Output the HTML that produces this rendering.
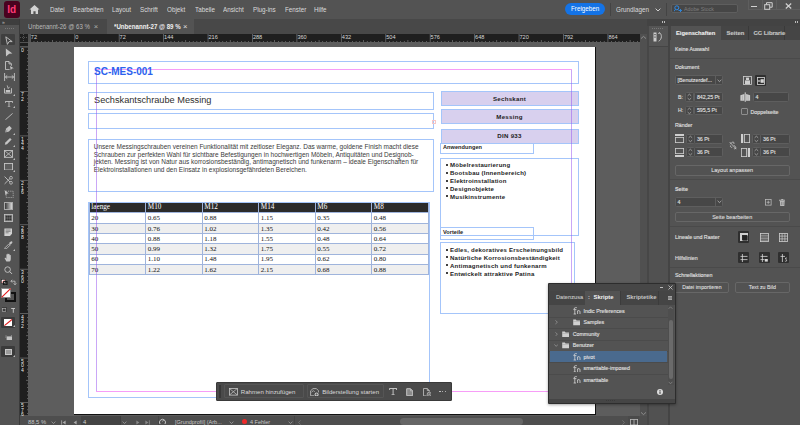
<!DOCTYPE html><html><head><meta charset="utf-8"><style>
html,body{margin:0;padding:0;width:800px;height:425px;overflow:hidden;background:#535353}
#r{position:relative;width:800px;height:425px;overflow:hidden;font-family:'Liberation Sans',sans-serif}
#r div,#r span,#r svg{position:absolute;box-sizing:border-box}
#r span{white-space:nowrap;line-height:1}
.m{color:#dadada;font-size:7px;transform:scaleX(0.9);transform-origin:0 0}
.ui{color:#d4d4d4;font-size:6.2px}
.fr{border:1px solid #8fb2f5}
.lav{background:#d9d1ee;border:1px solid #8fb2f5}
.cell{font-family:'Liberation Serif',serif;font-size:6.6px;color:#111}
.blt{font-weight:bold;font-size:6.5px;color:#1a1a1a;letter-spacing:0.25px}
</style></head><body><div id="r">
<div style="left:0px;top:0px;width:800px;height:19px;background:#535353"></div>
<div style="left:4px;top:1px;width:16px;height:17px;background:#49021f;border-radius:3px"></div>
<span style="left:7.2px;top:4.6px;font-weight:bold;font-size:10px;color:#ff3a76">Id</span>
<svg style="left:29px;top:4px" width="11" height="11" viewBox="0 0 11 11"><path d="M5.5 1 L10.5 5.6 L9 5.6 L9 10 L6.6 10 L6.6 7.2 L4.4 7.2 L4.4 10 L2 10 L2 5.6 L0.5 5.6 Z" fill="#d2d2d2"/></svg>
<span class="m" style="left:49.5px;top:6.1px">Datei</span>
<span class="m" style="left:72.5px;top:6.1px">Bearbeiten</span>
<span class="m" style="left:112px;top:6.1px">Layout</span>
<span class="m" style="left:139.5px;top:6.1px">Schrift</span>
<span class="m" style="left:167px;top:6.1px">Objekt</span>
<span class="m" style="left:194.5px;top:6.1px">Tabelle</span>
<span class="m" style="left:223px;top:6.1px">Ansicht</span>
<span class="m" style="left:252.5px;top:6.1px">Plug-ins</span>
<span class="m" style="left:284.5px;top:6.1px">Fenster</span>
<span class="m" style="left:313.5px;top:6.1px">Hilfe</span>
<div style="left:565px;top:3px;width:39.5px;height:12px;background:#1473e6;border-radius:6px"></div>
<span style="left:570.5px;top:5.8px;font-size:6.8px;color:#fff;transform:scaleX(0.92);transform-origin:0 0">Freigeben</span>
<div style="left:610px;top:3px;width:1px;height:13px;background:#444"></div>
<span class="m" style="left:615.5px;top:5.6px;font-size:7px">Grundlagen</span>
<svg style="left:654.5px;top:8px" width="6" height="4" viewBox="0 0 6 4"><path d="M0.6 0.6 L3 3 L5.4 0.6" stroke="#d0d0d0" stroke-width="1" fill="none"/></svg>
<div style="left:665.5px;top:3px;width:1px;height:13px;background:#444"></div>
<div style="left:670.5px;top:3.5px;width:67px;height:9.5px;background:#464646;border:1px solid #5e5e5e;border-radius:2px"></div>
<svg style="left:673.5px;top:5.3px" width="8" height="7" viewBox="0 0 8 7"><circle cx="2.8" cy="2.8" r="2" stroke="#2d8ceb" stroke-width="1" fill="none"/><path d="M1.2 4.6 L0 6.4 M4.5 5.5 L7.5 5.5 M6 4 L7.5 5.5 L6 7" stroke="#2d8ceb" stroke-width="0.9" fill="none"/></svg>
<span style="left:683.5px;top:5.6px;font-size:6px;color:#7e7e7e;transform:scaleX(0.88);transform-origin:0 0">Adobe Stock</span>
<div style="left:747.5px;top:0px;width:0.6px;height:9.5px;background:#5e5e5e"></div>
<div style="left:761.5px;top:0px;width:0.6px;height:9.5px;background:#5e5e5e"></div>
<div style="left:775.5px;top:0px;width:0.6px;height:9.5px;background:#5e5e5e"></div>
<div style="left:747.5px;top:9.3px;width:53px;height:0.6px;background:#5e5e5e"></div>
<div style="left:751px;top:5.6px;width:6px;height:1.2px;background:#d0d0d0"></div>
<svg style="left:764px;top:1.5px" width="9" height="8" viewBox="0 0 9 8"><rect x="0.7" y="2.7" width="5" height="4.6" stroke="#d0d0d0" stroke-width="1" fill="none"/><path d="M2.5 2.5 V0.7 H8.2 V5.2 H6" stroke="#d0d0d0" stroke-width="1" fill="none"/></svg>
<svg style="left:785px;top:2.5px" width="7" height="6" viewBox="0 0 7 6"><path d="M0.8 0.5 L6.2 5.5 M6.2 0.5 L0.8 5.5" stroke="#d0d0d0" stroke-width="1.2"/></svg>
<div style="left:0px;top:19px;width:648px;height:15px;background:#484848"></div>
<div style="left:107px;top:19px;width:87px;height:15px;background:#535353"></div>
<span class="ui" style="left:28px;top:23.6px;color:#b8b8b8;font-size:6.4px;transform:scaleX(0.95);transform-origin:0 0">Unbenannt-26 @ 63 %</span>
<span class="ui" style="left:93.8px;top:22.8px;color:#b0b0b0;font-size:7.6px">&#215;</span>
<span class="ui" style="left:114px;top:23.6px;color:#f0f0f0;font-size:6.4px;font-weight:bold;transform:scaleX(0.96);transform-origin:0 0">*Unbenannt-27 @ 89 %</span>
<span class="ui" style="left:183px;top:22.8px;color:#e0e0e0;font-size:7.6px">&#215;</span>
<div style="left:0px;top:19px;width:20px;height:406px;background:#535353"></div>
<div style="left:0px;top:19px;width:20px;height:6px;background:#3e3e3e"></div>
<div style="left:19.4px;top:19px;width:0.8px;height:406px;background:#3a3a3a"></div>
<span style="left:2px;top:19.5px;font-size:5px;color:#bbb">&#187;</span>
<div style="left:5px;top:27.5px;width:1px;height:1px;background:#777"></div>
<div style="left:7px;top:27.5px;width:1px;height:1px;background:#777"></div>
<div style="left:9px;top:27.5px;width:1px;height:1px;background:#777"></div>
<div style="left:11px;top:27.5px;width:1px;height:1px;background:#777"></div>
<div style="left:13px;top:27.5px;width:1px;height:1px;background:#777"></div>
<div style="left:1.2px;top:34px;width:14px;height:11px;background:#3f3f3f;border-radius:1px"></div>
<div style="left:20px;top:34px;width:620px;height:8px;background:#1f1f1f"></div>
<div style="left:28px;top:34px;width:1.5px;height:8px;background:#535353"></div>
<div style="left:20px;top:43px;width:8px;height:3px;background:#1f1f1f"></div>
<div style="left:20px;top:47px;width:8px;height:368px;background:#1f1f1f"></div>
<svg style="left:20px;top:34px" width="8" height="8"><path d="M0 3.5 H8 M3.5 0 V8" stroke="#777" stroke-width="0.6" stroke-dasharray="1 1"/></svg>
<div style="left:28px;top:42px;width:612px;height:375px;background:#5d5d5d"></div>
<svg style="left:29.5px;top:34px" width="611" height="8"><rect x="-0.08" y="0" width="0.8" height="8" fill="#6e6e6e"/><rect x="3.67" y="7" width="0.6" height="1" fill="#8a8a8a"/><rect x="7.38" y="7" width="0.6" height="1" fill="#8a8a8a"/><rect x="11.08" y="7" width="0.6" height="1" fill="#8a8a8a"/><rect x="14.78" y="7" width="0.6" height="1" fill="#8a8a8a"/><rect x="18.48" y="7" width="0.6" height="1" fill="#8a8a8a"/><rect x="22.18" y="6" width="0.6" height="2" fill="#8a8a8a"/><rect x="25.89" y="7" width="0.6" height="1" fill="#8a8a8a"/><rect x="29.59" y="7" width="0.6" height="1" fill="#8a8a8a"/><rect x="33.29" y="7" width="0.6" height="1" fill="#8a8a8a"/><rect x="37.00" y="7" width="0.6" height="1" fill="#8a8a8a"/><rect x="40.70" y="7" width="0.6" height="1" fill="#8a8a8a"/><rect x="44.35" y="0" width="0.8" height="8" fill="#6e6e6e"/><rect x="48.10" y="7" width="0.6" height="1" fill="#8a8a8a"/><rect x="51.81" y="7" width="0.6" height="1" fill="#8a8a8a"/><rect x="55.51" y="7" width="0.6" height="1" fill="#8a8a8a"/><rect x="59.21" y="7" width="0.6" height="1" fill="#8a8a8a"/><rect x="62.91" y="7" width="0.6" height="1" fill="#8a8a8a"/><rect x="66.62" y="6" width="0.6" height="2" fill="#8a8a8a"/><rect x="70.32" y="7" width="0.6" height="1" fill="#8a8a8a"/><rect x="74.02" y="7" width="0.6" height="1" fill="#8a8a8a"/><rect x="77.72" y="7" width="0.6" height="1" fill="#8a8a8a"/><rect x="81.42" y="7" width="0.6" height="1" fill="#8a8a8a"/><rect x="85.13" y="7" width="0.6" height="1" fill="#8a8a8a"/><rect x="88.78" y="0" width="0.8" height="8" fill="#6e6e6e"/><rect x="92.53" y="7" width="0.6" height="1" fill="#8a8a8a"/><rect x="96.23" y="7" width="0.6" height="1" fill="#8a8a8a"/><rect x="99.94" y="7" width="0.6" height="1" fill="#8a8a8a"/><rect x="103.64" y="7" width="0.6" height="1" fill="#8a8a8a"/><rect x="107.34" y="7" width="0.6" height="1" fill="#8a8a8a"/><rect x="111.05" y="6" width="0.6" height="2" fill="#8a8a8a"/><rect x="114.75" y="7" width="0.6" height="1" fill="#8a8a8a"/><rect x="118.45" y="7" width="0.6" height="1" fill="#8a8a8a"/><rect x="122.15" y="7" width="0.6" height="1" fill="#8a8a8a"/><rect x="125.86" y="7" width="0.6" height="1" fill="#8a8a8a"/><rect x="129.56" y="7" width="0.6" height="1" fill="#8a8a8a"/><rect x="133.21" y="0" width="0.8" height="8" fill="#6e6e6e"/><rect x="136.96" y="7" width="0.6" height="1" fill="#8a8a8a"/><rect x="140.66" y="7" width="0.6" height="1" fill="#8a8a8a"/><rect x="144.37" y="7" width="0.6" height="1" fill="#8a8a8a"/><rect x="148.07" y="7" width="0.6" height="1" fill="#8a8a8a"/><rect x="151.77" y="7" width="0.6" height="1" fill="#8a8a8a"/><rect x="155.47" y="6" width="0.6" height="2" fill="#8a8a8a"/><rect x="159.18" y="7" width="0.6" height="1" fill="#8a8a8a"/><rect x="162.88" y="7" width="0.6" height="1" fill="#8a8a8a"/><rect x="166.58" y="7" width="0.6" height="1" fill="#8a8a8a"/><rect x="170.28" y="7" width="0.6" height="1" fill="#8a8a8a"/><rect x="173.99" y="7" width="0.6" height="1" fill="#8a8a8a"/><rect x="177.64" y="0" width="0.8" height="8" fill="#6e6e6e"/><rect x="181.39" y="7" width="0.6" height="1" fill="#8a8a8a"/><rect x="185.09" y="7" width="0.6" height="1" fill="#8a8a8a"/><rect x="188.80" y="7" width="0.6" height="1" fill="#8a8a8a"/><rect x="192.50" y="7" width="0.6" height="1" fill="#8a8a8a"/><rect x="196.20" y="7" width="0.6" height="1" fill="#8a8a8a"/><rect x="199.90" y="6" width="0.6" height="2" fill="#8a8a8a"/><rect x="203.61" y="7" width="0.6" height="1" fill="#8a8a8a"/><rect x="207.31" y="7" width="0.6" height="1" fill="#8a8a8a"/><rect x="211.01" y="7" width="0.6" height="1" fill="#8a8a8a"/><rect x="214.71" y="7" width="0.6" height="1" fill="#8a8a8a"/><rect x="218.42" y="7" width="0.6" height="1" fill="#8a8a8a"/><rect x="222.07" y="0" width="0.8" height="8" fill="#6e6e6e"/><rect x="225.82" y="7" width="0.6" height="1" fill="#8a8a8a"/><rect x="229.52" y="7" width="0.6" height="1" fill="#8a8a8a"/><rect x="233.23" y="7" width="0.6" height="1" fill="#8a8a8a"/><rect x="236.93" y="7" width="0.6" height="1" fill="#8a8a8a"/><rect x="240.63" y="7" width="0.6" height="1" fill="#8a8a8a"/><rect x="244.33" y="6" width="0.6" height="2" fill="#8a8a8a"/><rect x="248.04" y="7" width="0.6" height="1" fill="#8a8a8a"/><rect x="251.74" y="7" width="0.6" height="1" fill="#8a8a8a"/><rect x="255.44" y="7" width="0.6" height="1" fill="#8a8a8a"/><rect x="259.14" y="7" width="0.6" height="1" fill="#8a8a8a"/><rect x="262.85" y="7" width="0.6" height="1" fill="#8a8a8a"/><rect x="266.50" y="0" width="0.8" height="8" fill="#6e6e6e"/><rect x="270.25" y="7" width="0.6" height="1" fill="#8a8a8a"/><rect x="273.95" y="7" width="0.6" height="1" fill="#8a8a8a"/><rect x="277.66" y="7" width="0.6" height="1" fill="#8a8a8a"/><rect x="281.36" y="7" width="0.6" height="1" fill="#8a8a8a"/><rect x="285.06" y="7" width="0.6" height="1" fill="#8a8a8a"/><rect x="288.76" y="6" width="0.6" height="2" fill="#8a8a8a"/><rect x="292.47" y="7" width="0.6" height="1" fill="#8a8a8a"/><rect x="296.17" y="7" width="0.6" height="1" fill="#8a8a8a"/><rect x="299.87" y="7" width="0.6" height="1" fill="#8a8a8a"/><rect x="303.57" y="7" width="0.6" height="1" fill="#8a8a8a"/><rect x="307.28" y="7" width="0.6" height="1" fill="#8a8a8a"/><rect x="310.93" y="0" width="0.8" height="8" fill="#6e6e6e"/><rect x="314.68" y="7" width="0.6" height="1" fill="#8a8a8a"/><rect x="318.38" y="7" width="0.6" height="1" fill="#8a8a8a"/><rect x="322.09" y="7" width="0.6" height="1" fill="#8a8a8a"/><rect x="325.79" y="7" width="0.6" height="1" fill="#8a8a8a"/><rect x="329.49" y="7" width="0.6" height="1" fill="#8a8a8a"/><rect x="333.19" y="6" width="0.6" height="2" fill="#8a8a8a"/><rect x="336.90" y="7" width="0.6" height="1" fill="#8a8a8a"/><rect x="340.60" y="7" width="0.6" height="1" fill="#8a8a8a"/><rect x="344.30" y="7" width="0.6" height="1" fill="#8a8a8a"/><rect x="348.00" y="7" width="0.6" height="1" fill="#8a8a8a"/><rect x="351.71" y="7" width="0.6" height="1" fill="#8a8a8a"/><rect x="355.36" y="0" width="0.8" height="8" fill="#6e6e6e"/><rect x="359.11" y="7" width="0.6" height="1" fill="#8a8a8a"/><rect x="362.81" y="7" width="0.6" height="1" fill="#8a8a8a"/><rect x="366.52" y="7" width="0.6" height="1" fill="#8a8a8a"/><rect x="370.22" y="7" width="0.6" height="1" fill="#8a8a8a"/><rect x="373.92" y="7" width="0.6" height="1" fill="#8a8a8a"/><rect x="377.62" y="6" width="0.6" height="2" fill="#8a8a8a"/><rect x="381.33" y="7" width="0.6" height="1" fill="#8a8a8a"/><rect x="385.03" y="7" width="0.6" height="1" fill="#8a8a8a"/><rect x="388.73" y="7" width="0.6" height="1" fill="#8a8a8a"/><rect x="392.44" y="7" width="0.6" height="1" fill="#8a8a8a"/><rect x="396.14" y="7" width="0.6" height="1" fill="#8a8a8a"/><rect x="399.79" y="0" width="0.8" height="8" fill="#6e6e6e"/><rect x="403.54" y="7" width="0.6" height="1" fill="#8a8a8a"/><rect x="407.25" y="7" width="0.6" height="1" fill="#8a8a8a"/><rect x="410.95" y="7" width="0.6" height="1" fill="#8a8a8a"/><rect x="414.65" y="7" width="0.6" height="1" fill="#8a8a8a"/><rect x="418.35" y="7" width="0.6" height="1" fill="#8a8a8a"/><rect x="422.05" y="6" width="0.6" height="2" fill="#8a8a8a"/><rect x="425.76" y="7" width="0.6" height="1" fill="#8a8a8a"/><rect x="429.46" y="7" width="0.6" height="1" fill="#8a8a8a"/><rect x="433.16" y="7" width="0.6" height="1" fill="#8a8a8a"/><rect x="436.86" y="7" width="0.6" height="1" fill="#8a8a8a"/><rect x="440.57" y="7" width="0.6" height="1" fill="#8a8a8a"/><rect x="444.22" y="0" width="0.8" height="8" fill="#6e6e6e"/><rect x="447.97" y="7" width="0.6" height="1" fill="#8a8a8a"/><rect x="451.68" y="7" width="0.6" height="1" fill="#8a8a8a"/><rect x="455.38" y="7" width="0.6" height="1" fill="#8a8a8a"/><rect x="459.08" y="7" width="0.6" height="1" fill="#8a8a8a"/><rect x="462.78" y="7" width="0.6" height="1" fill="#8a8a8a"/><rect x="466.48" y="6" width="0.6" height="2" fill="#8a8a8a"/><rect x="470.19" y="7" width="0.6" height="1" fill="#8a8a8a"/><rect x="473.89" y="7" width="0.6" height="1" fill="#8a8a8a"/><rect x="477.59" y="7" width="0.6" height="1" fill="#8a8a8a"/><rect x="481.29" y="7" width="0.6" height="1" fill="#8a8a8a"/><rect x="485.00" y="7" width="0.6" height="1" fill="#8a8a8a"/><rect x="488.65" y="0" width="0.8" height="8" fill="#6e6e6e"/><rect x="492.40" y="7" width="0.6" height="1" fill="#8a8a8a"/><rect x="496.10" y="7" width="0.6" height="1" fill="#8a8a8a"/><rect x="499.81" y="7" width="0.6" height="1" fill="#8a8a8a"/><rect x="503.51" y="7" width="0.6" height="1" fill="#8a8a8a"/><rect x="507.21" y="7" width="0.6" height="1" fill="#8a8a8a"/><rect x="510.92" y="6" width="0.6" height="2" fill="#8a8a8a"/><rect x="514.62" y="7" width="0.6" height="1" fill="#8a8a8a"/><rect x="518.32" y="7" width="0.6" height="1" fill="#8a8a8a"/><rect x="522.02" y="7" width="0.6" height="1" fill="#8a8a8a"/><rect x="525.73" y="7" width="0.6" height="1" fill="#8a8a8a"/><rect x="529.43" y="7" width="0.6" height="1" fill="#8a8a8a"/><rect x="533.08" y="0" width="0.8" height="8" fill="#6e6e6e"/><rect x="536.83" y="7" width="0.6" height="1" fill="#8a8a8a"/><rect x="540.54" y="7" width="0.6" height="1" fill="#8a8a8a"/><rect x="544.24" y="7" width="0.6" height="1" fill="#8a8a8a"/><rect x="547.94" y="7" width="0.6" height="1" fill="#8a8a8a"/><rect x="551.64" y="7" width="0.6" height="1" fill="#8a8a8a"/><rect x="555.35" y="6" width="0.6" height="2" fill="#8a8a8a"/><rect x="559.05" y="7" width="0.6" height="1" fill="#8a8a8a"/><rect x="562.75" y="7" width="0.6" height="1" fill="#8a8a8a"/><rect x="566.45" y="7" width="0.6" height="1" fill="#8a8a8a"/><rect x="570.16" y="7" width="0.6" height="1" fill="#8a8a8a"/><rect x="573.86" y="7" width="0.6" height="1" fill="#8a8a8a"/><rect x="577.51" y="0" width="0.8" height="8" fill="#6e6e6e"/><rect x="581.26" y="7" width="0.6" height="1" fill="#8a8a8a"/><rect x="584.97" y="7" width="0.6" height="1" fill="#8a8a8a"/><rect x="588.67" y="7" width="0.6" height="1" fill="#8a8a8a"/><rect x="592.37" y="7" width="0.6" height="1" fill="#8a8a8a"/><rect x="596.07" y="7" width="0.6" height="1" fill="#8a8a8a"/><rect x="599.78" y="6" width="0.6" height="2" fill="#8a8a8a"/><rect x="603.48" y="7" width="0.6" height="1" fill="#8a8a8a"/><rect x="607.18" y="7" width="0.6" height="1" fill="#8a8a8a"/></svg>
<span style="left:30.8px;top:34.6px;font-size:5.6px;color:#d8d8d8">72</span>
<span style="left:75.2px;top:34.6px;font-size:5.6px;color:#d8d8d8">0</span>
<span style="left:119.6px;top:34.6px;font-size:5.6px;color:#d8d8d8">72</span>
<span style="left:164.1px;top:34.6px;font-size:5.6px;color:#d8d8d8">144</span>
<span style="left:208.5px;top:34.6px;font-size:5.6px;color:#d8d8d8">216</span>
<span style="left:252.9px;top:34.6px;font-size:5.6px;color:#d8d8d8">288</span>
<span style="left:297.4px;top:34.6px;font-size:5.6px;color:#d8d8d8">360</span>
<span style="left:341.8px;top:34.6px;font-size:5.6px;color:#d8d8d8">432</span>
<span style="left:386.2px;top:34.6px;font-size:5.6px;color:#d8d8d8">504</span>
<span style="left:430.6px;top:34.6px;font-size:5.6px;color:#d8d8d8">576</span>
<span style="left:475.1px;top:34.6px;font-size:5.6px;color:#d8d8d8">648</span>
<span style="left:519.5px;top:34.6px;font-size:5.6px;color:#d8d8d8">720</span>
<span style="left:563.9px;top:34.6px;font-size:5.6px;color:#d8d8d8">792</span>
<span style="left:608.4px;top:34.6px;font-size:5.6px;color:#d8d8d8">864</span>
<svg style="left:20px;top:47px" width="8" height="368"><rect x="0" y="-0.35" width="8" height="0.8" fill="#6e6e6e"/><rect x="7" y="3.40" width="1" height="0.6" fill="#8a8a8a"/><rect x="7" y="7.11" width="1" height="0.6" fill="#8a8a8a"/><rect x="7" y="10.81" width="1" height="0.6" fill="#8a8a8a"/><rect x="7" y="14.51" width="1" height="0.6" fill="#8a8a8a"/><rect x="7" y="18.21" width="1" height="0.6" fill="#8a8a8a"/><rect x="6" y="21.92" width="2" height="0.6" fill="#8a8a8a"/><rect x="7" y="25.62" width="1" height="0.6" fill="#8a8a8a"/><rect x="7" y="29.32" width="1" height="0.6" fill="#8a8a8a"/><rect x="7" y="33.02" width="1" height="0.6" fill="#8a8a8a"/><rect x="7" y="36.73" width="1" height="0.6" fill="#8a8a8a"/><rect x="7" y="40.43" width="1" height="0.6" fill="#8a8a8a"/><rect x="0" y="44.08" width="8" height="0.8" fill="#6e6e6e"/><rect x="7" y="47.83" width="1" height="0.6" fill="#8a8a8a"/><rect x="7" y="51.54" width="1" height="0.6" fill="#8a8a8a"/><rect x="7" y="55.24" width="1" height="0.6" fill="#8a8a8a"/><rect x="7" y="58.94" width="1" height="0.6" fill="#8a8a8a"/><rect x="7" y="62.64" width="1" height="0.6" fill="#8a8a8a"/><rect x="6" y="66.34" width="2" height="0.6" fill="#8a8a8a"/><rect x="7" y="70.05" width="1" height="0.6" fill="#8a8a8a"/><rect x="7" y="73.75" width="1" height="0.6" fill="#8a8a8a"/><rect x="7" y="77.45" width="1" height="0.6" fill="#8a8a8a"/><rect x="7" y="81.15" width="1" height="0.6" fill="#8a8a8a"/><rect x="7" y="84.86" width="1" height="0.6" fill="#8a8a8a"/><rect x="0" y="88.51" width="8" height="0.8" fill="#6e6e6e"/><rect x="7" y="92.26" width="1" height="0.6" fill="#8a8a8a"/><rect x="7" y="95.96" width="1" height="0.6" fill="#8a8a8a"/><rect x="7" y="99.67" width="1" height="0.6" fill="#8a8a8a"/><rect x="7" y="103.37" width="1" height="0.6" fill="#8a8a8a"/><rect x="7" y="107.07" width="1" height="0.6" fill="#8a8a8a"/><rect x="6" y="110.77" width="2" height="0.6" fill="#8a8a8a"/><rect x="7" y="114.48" width="1" height="0.6" fill="#8a8a8a"/><rect x="7" y="118.18" width="1" height="0.6" fill="#8a8a8a"/><rect x="7" y="121.88" width="1" height="0.6" fill="#8a8a8a"/><rect x="7" y="125.58" width="1" height="0.6" fill="#8a8a8a"/><rect x="7" y="129.29" width="1" height="0.6" fill="#8a8a8a"/><rect x="0" y="132.94" width="8" height="0.8" fill="#6e6e6e"/><rect x="7" y="136.69" width="1" height="0.6" fill="#8a8a8a"/><rect x="7" y="140.39" width="1" height="0.6" fill="#8a8a8a"/><rect x="7" y="144.10" width="1" height="0.6" fill="#8a8a8a"/><rect x="7" y="147.80" width="1" height="0.6" fill="#8a8a8a"/><rect x="7" y="151.50" width="1" height="0.6" fill="#8a8a8a"/><rect x="6" y="155.20" width="2" height="0.6" fill="#8a8a8a"/><rect x="7" y="158.91" width="1" height="0.6" fill="#8a8a8a"/><rect x="7" y="162.61" width="1" height="0.6" fill="#8a8a8a"/><rect x="7" y="166.31" width="1" height="0.6" fill="#8a8a8a"/><rect x="7" y="170.01" width="1" height="0.6" fill="#8a8a8a"/><rect x="7" y="173.72" width="1" height="0.6" fill="#8a8a8a"/><rect x="0" y="177.37" width="8" height="0.8" fill="#6e6e6e"/><rect x="7" y="181.12" width="1" height="0.6" fill="#8a8a8a"/><rect x="7" y="184.82" width="1" height="0.6" fill="#8a8a8a"/><rect x="7" y="188.53" width="1" height="0.6" fill="#8a8a8a"/><rect x="7" y="192.23" width="1" height="0.6" fill="#8a8a8a"/><rect x="7" y="195.93" width="1" height="0.6" fill="#8a8a8a"/><rect x="6" y="199.63" width="2" height="0.6" fill="#8a8a8a"/><rect x="7" y="203.34" width="1" height="0.6" fill="#8a8a8a"/><rect x="7" y="207.04" width="1" height="0.6" fill="#8a8a8a"/><rect x="7" y="210.74" width="1" height="0.6" fill="#8a8a8a"/><rect x="7" y="214.44" width="1" height="0.6" fill="#8a8a8a"/><rect x="7" y="218.15" width="1" height="0.6" fill="#8a8a8a"/><rect x="0" y="221.80" width="8" height="0.8" fill="#6e6e6e"/><rect x="7" y="225.55" width="1" height="0.6" fill="#8a8a8a"/><rect x="7" y="229.25" width="1" height="0.6" fill="#8a8a8a"/><rect x="7" y="232.96" width="1" height="0.6" fill="#8a8a8a"/><rect x="7" y="236.66" width="1" height="0.6" fill="#8a8a8a"/><rect x="7" y="240.36" width="1" height="0.6" fill="#8a8a8a"/><rect x="6" y="244.06" width="2" height="0.6" fill="#8a8a8a"/><rect x="7" y="247.77" width="1" height="0.6" fill="#8a8a8a"/><rect x="7" y="251.47" width="1" height="0.6" fill="#8a8a8a"/><rect x="7" y="255.17" width="1" height="0.6" fill="#8a8a8a"/><rect x="7" y="258.88" width="1" height="0.6" fill="#8a8a8a"/><rect x="7" y="262.58" width="1" height="0.6" fill="#8a8a8a"/><rect x="0" y="266.23" width="8" height="0.8" fill="#6e6e6e"/><rect x="7" y="269.98" width="1" height="0.6" fill="#8a8a8a"/><rect x="7" y="273.69" width="1" height="0.6" fill="#8a8a8a"/><rect x="7" y="277.39" width="1" height="0.6" fill="#8a8a8a"/><rect x="7" y="281.09" width="1" height="0.6" fill="#8a8a8a"/><rect x="7" y="284.79" width="1" height="0.6" fill="#8a8a8a"/><rect x="6" y="288.50" width="2" height="0.6" fill="#8a8a8a"/><rect x="7" y="292.20" width="1" height="0.6" fill="#8a8a8a"/><rect x="7" y="295.90" width="1" height="0.6" fill="#8a8a8a"/><rect x="7" y="299.60" width="1" height="0.6" fill="#8a8a8a"/><rect x="7" y="303.30" width="1" height="0.6" fill="#8a8a8a"/><rect x="7" y="307.01" width="1" height="0.6" fill="#8a8a8a"/><rect x="0" y="310.66" width="8" height="0.8" fill="#6e6e6e"/><rect x="7" y="314.41" width="1" height="0.6" fill="#8a8a8a"/><rect x="7" y="318.12" width="1" height="0.6" fill="#8a8a8a"/><rect x="7" y="321.82" width="1" height="0.6" fill="#8a8a8a"/><rect x="7" y="325.52" width="1" height="0.6" fill="#8a8a8a"/><rect x="7" y="329.22" width="1" height="0.6" fill="#8a8a8a"/><rect x="6" y="332.92" width="2" height="0.6" fill="#8a8a8a"/><rect x="7" y="336.63" width="1" height="0.6" fill="#8a8a8a"/><rect x="7" y="340.33" width="1" height="0.6" fill="#8a8a8a"/><rect x="7" y="344.03" width="1" height="0.6" fill="#8a8a8a"/><rect x="7" y="347.74" width="1" height="0.6" fill="#8a8a8a"/><rect x="7" y="351.44" width="1" height="0.6" fill="#8a8a8a"/><rect x="0" y="355.09" width="8" height="0.8" fill="#6e6e6e"/><rect x="7" y="358.84" width="1" height="0.6" fill="#8a8a8a"/><rect x="7" y="362.55" width="1" height="0.6" fill="#8a8a8a"/><rect x="7" y="366.25" width="1" height="0.6" fill="#8a8a8a"/></svg>
<span style="left:21px;top:47.9px;font-size:6px;line-height:4.5px;color:#e8e8e8;white-space:normal;width:5px;transform:scaleX(0.85);transform-origin:0 0">0</span>
<span style="left:21px;top:92.3px;font-size:6px;line-height:4.5px;color:#e8e8e8;white-space:normal;width:5px;transform:scaleX(0.85);transform-origin:0 0">7<br>2</span>
<span style="left:21px;top:136.8px;font-size:6px;line-height:4.5px;color:#e8e8e8;white-space:normal;width:5px;transform:scaleX(0.85);transform-origin:0 0">1<br>4<br>4</span>
<span style="left:21px;top:181.2px;font-size:6px;line-height:4.5px;color:#e8e8e8;white-space:normal;width:5px;transform:scaleX(0.85);transform-origin:0 0">2<br>1<br>6</span>
<span style="left:21px;top:225.6px;font-size:6px;line-height:4.5px;color:#e8e8e8;white-space:normal;width:5px;transform:scaleX(0.85);transform-origin:0 0">2<br>8<br>8</span>
<span style="left:21px;top:270.0px;font-size:6px;line-height:4.5px;color:#e8e8e8;white-space:normal;width:5px;transform:scaleX(0.85);transform-origin:0 0">3<br>6<br>0</span>
<span style="left:21px;top:314.5px;font-size:6px;line-height:4.5px;color:#e8e8e8;white-space:normal;width:5px;transform:scaleX(0.85);transform-origin:0 0">4<br>3<br>2</span>
<span style="left:21px;top:358.9px;font-size:6px;line-height:4.5px;color:#e8e8e8;white-space:normal;width:5px;transform:scaleX(0.85);transform-origin:0 0">5<br>0<br>4</span>
<span style="left:21px;top:403.3px;font-size:6px;line-height:4.5px;color:#e8e8e8;white-space:normal;width:5px;transform:scaleX(0.85);transform-origin:0 0">5<br>7<br>6</span>
<div style="left:74px;top:47px;width:522px;height:368px;background:#111"></div>
<div style="left:74px;top:47px;width:520.5px;height:367px;background:#fff"></div>
<div style="left:88px;top:61px;width:491px;height:23px;border:1px solid #a4c5fa;"></div>
<div style="left:88px;top:91.5px;width:346px;height:18.0px;border:1px solid #a4c5fa;"></div>
<span style="left:94px;top:96.21px;font-size:9.2px;color:#2e2e2e">Sechskantschraube Messing</span>
<div style="left:88px;top:113px;width:346px;height:16px;border:1px solid #a4c5fa;"></div>
<div style="left:431.5px;top:119.5px;width:4px;height:4px;border:0.6px solid #f6c6c6"></div>
<div style="left:88px;top:139px;width:346px;height:53px;border:1px solid #a4c5fa;"></div>
<span style="left:93.8px;top:143.91px;font-size:6.49px;color:#3a3a3a">Unsere Messingschrauben vereinen Funktionalität mit zeitloser Eleganz. Das warme, goldene Finish macht diese</span>
<span style="left:93.8px;top:151.53px;font-size:6.49px;color:#3a3a3a">Schrauben zur perfekten Wahl für sichtbare Befestigungen in hochwertigen Möbeln, Antiquitäten und Designob-</span>
<span style="left:93.8px;top:159.15px;font-size:6.49px;color:#3a3a3a">jekten. Messing ist von Natur aus korrosionsbeständig, antimagnetisch und funkenarm – ideale Eigenschaften für</span>
<span style="left:93.8px;top:166.77px;font-size:6.49px;color:#3a3a3a">Elektroinstallationen und den Einsatz in explosionsgefährdeten Bereichen.</span>
<div style="left:88px;top:202px;width:342px;height:196px;border:1px solid #a4c5fa;"></div>
<div style="left:89px;top:202.5px;width:339px;height:10.1px;background:#2b2b2b"></div>
<div style="left:89px;top:212.6px;width:339px;height:10.5px;background:#ffffff"></div>
<div style="left:89px;top:223.1px;width:339px;height:10.200000000000017px;background:#efefef"></div>
<div style="left:89px;top:233.3px;width:339px;height:10.099999999999994px;background:#ffffff"></div>
<div style="left:89px;top:243.4px;width:339px;height:10.599999999999994px;background:#efefef"></div>
<div style="left:89px;top:254px;width:339px;height:10.399999999999977px;background:#ffffff"></div>
<div style="left:89px;top:264.4px;width:339px;height:10.100000000000023px;background:#efefef"></div>
<div style="left:89px;top:212.1px;width:339px;height:0.9px;background:#9fb4dc"></div>
<div style="left:89px;top:222.6px;width:339px;height:0.9px;background:#9fb4dc"></div>
<div style="left:89px;top:232.8px;width:339px;height:0.9px;background:#9fb4dc"></div>
<div style="left:89px;top:242.9px;width:339px;height:0.9px;background:#9fb4dc"></div>
<div style="left:89px;top:253.5px;width:339px;height:0.9px;background:#9fb4dc"></div>
<div style="left:89px;top:263.9px;width:339px;height:0.9px;background:#9fb4dc"></div>
<div style="left:89px;top:274.0px;width:339px;height:0.9px;background:#9fb4dc"></div>
<div style="left:88.55px;top:202.5px;width:0.9px;height:72px;background:#9fb4dc"></div>
<div style="left:145.05px;top:202.5px;width:0.9px;height:72px;background:#9fb4dc"></div>
<div style="left:201.55px;top:202.5px;width:0.9px;height:72px;background:#9fb4dc"></div>
<div style="left:258.05px;top:202.5px;width:0.9px;height:72px;background:#9fb4dc"></div>
<div style="left:314.55px;top:202.5px;width:0.9px;height:72px;background:#9fb4dc"></div>
<div style="left:371.05px;top:202.5px;width:0.9px;height:72px;background:#9fb4dc"></div>
<div style="left:427.55px;top:202.5px;width:0.9px;height:72px;background:#9fb4dc"></div>
<span style="left:91.3px;top:204.41px;font-size:7.2px;font-family:'Liberation Serif',serif;color:#fff">laenge</span>
<span style="left:147.8px;top:204.41px;font-size:7.2px;font-family:'Liberation Serif',serif;color:#fff">M10</span>
<span style="left:204.3px;top:204.41px;font-size:7.2px;font-family:'Liberation Serif',serif;color:#fff">M12</span>
<span style="left:260.8px;top:204.41px;font-size:7.2px;font-family:'Liberation Serif',serif;color:#fff">M14</span>
<span style="left:317.3px;top:204.41px;font-size:7.2px;font-family:'Liberation Serif',serif;color:#fff">M6</span>
<span style="left:373.8px;top:204.41px;font-size:7.2px;font-family:'Liberation Serif',serif;color:#fff">M8</span>
<span style="left:91.3px;top:215.07px;font-size:7.0px;font-family:'Liberation Serif',serif;color:#111">20</span>
<span style="left:147.8px;top:215.07px;font-size:7.0px;font-family:'Liberation Serif',serif;color:#111">0.65</span>
<span style="left:204.3px;top:215.07px;font-size:7.0px;font-family:'Liberation Serif',serif;color:#111">0.88</span>
<span style="left:260.8px;top:215.07px;font-size:7.0px;font-family:'Liberation Serif',serif;color:#111">1.15</span>
<span style="left:317.3px;top:215.07px;font-size:7.0px;font-family:'Liberation Serif',serif;color:#111">0.35</span>
<span style="left:373.8px;top:215.07px;font-size:7.0px;font-family:'Liberation Serif',serif;color:#111">0.48</span>
<span style="left:91.3px;top:225.57px;font-size:7.0px;font-family:'Liberation Serif',serif;color:#111">30</span>
<span style="left:147.8px;top:225.57px;font-size:7.0px;font-family:'Liberation Serif',serif;color:#111">0.76</span>
<span style="left:204.3px;top:225.57px;font-size:7.0px;font-family:'Liberation Serif',serif;color:#111">1.02</span>
<span style="left:260.8px;top:225.57px;font-size:7.0px;font-family:'Liberation Serif',serif;color:#111">1.35</span>
<span style="left:317.3px;top:225.57px;font-size:7.0px;font-family:'Liberation Serif',serif;color:#111">0.42</span>
<span style="left:373.8px;top:225.57px;font-size:7.0px;font-family:'Liberation Serif',serif;color:#111">0.56</span>
<span style="left:91.3px;top:235.77px;font-size:7.0px;font-family:'Liberation Serif',serif;color:#111">40</span>
<span style="left:147.8px;top:235.77px;font-size:7.0px;font-family:'Liberation Serif',serif;color:#111">0.88</span>
<span style="left:204.3px;top:235.77px;font-size:7.0px;font-family:'Liberation Serif',serif;color:#111">1.18</span>
<span style="left:260.8px;top:235.77px;font-size:7.0px;font-family:'Liberation Serif',serif;color:#111">1.55</span>
<span style="left:317.3px;top:235.77px;font-size:7.0px;font-family:'Liberation Serif',serif;color:#111">0.48</span>
<span style="left:373.8px;top:235.77px;font-size:7.0px;font-family:'Liberation Serif',serif;color:#111">0.64</span>
<span style="left:91.3px;top:245.87px;font-size:7.0px;font-family:'Liberation Serif',serif;color:#111">50</span>
<span style="left:147.8px;top:245.87px;font-size:7.0px;font-family:'Liberation Serif',serif;color:#111">0.99</span>
<span style="left:204.3px;top:245.87px;font-size:7.0px;font-family:'Liberation Serif',serif;color:#111">1.32</span>
<span style="left:260.8px;top:245.87px;font-size:7.0px;font-family:'Liberation Serif',serif;color:#111">1.75</span>
<span style="left:317.3px;top:245.87px;font-size:7.0px;font-family:'Liberation Serif',serif;color:#111">0.55</span>
<span style="left:373.8px;top:245.87px;font-size:7.0px;font-family:'Liberation Serif',serif;color:#111">0.72</span>
<span style="left:91.3px;top:256.47px;font-size:7.0px;font-family:'Liberation Serif',serif;color:#111">60</span>
<span style="left:147.8px;top:256.47px;font-size:7.0px;font-family:'Liberation Serif',serif;color:#111">1.10</span>
<span style="left:204.3px;top:256.47px;font-size:7.0px;font-family:'Liberation Serif',serif;color:#111">1.48</span>
<span style="left:260.8px;top:256.47px;font-size:7.0px;font-family:'Liberation Serif',serif;color:#111">1.95</span>
<span style="left:317.3px;top:256.47px;font-size:7.0px;font-family:'Liberation Serif',serif;color:#111">0.62</span>
<span style="left:373.8px;top:256.47px;font-size:7.0px;font-family:'Liberation Serif',serif;color:#111">0.80</span>
<span style="left:91.3px;top:266.87px;font-size:7.0px;font-family:'Liberation Serif',serif;color:#111">70</span>
<span style="left:147.8px;top:266.87px;font-size:7.0px;font-family:'Liberation Serif',serif;color:#111">1.22</span>
<span style="left:204.3px;top:266.87px;font-size:7.0px;font-family:'Liberation Serif',serif;color:#111">1.62</span>
<span style="left:260.8px;top:266.87px;font-size:7.0px;font-family:'Liberation Serif',serif;color:#111">2.15</span>
<span style="left:317.3px;top:266.87px;font-size:7.0px;font-family:'Liberation Serif',serif;color:#111">0.68</span>
<span style="left:373.8px;top:266.87px;font-size:7.0px;font-family:'Liberation Serif',serif;color:#111">0.88</span>
<div style="left:440.5px;top:91.4px;width:138px;height:14.199999999999989px;background:#d8d0ee;border:1px solid #a4c5fa"></div>
<span style="left:409.5px;width:200px;text-align:center;top:95.99px;font-size:6.15px;font-weight:bold;color:#1c1c1c;letter-spacing:0.28px">Sechskant</span>
<div style="left:440.5px;top:109.4px;width:138px;height:15.0px;background:#d8d0ee;border:1px solid #a4c5fa"></div>
<span style="left:409.5px;width:200px;text-align:center;top:114.09px;font-size:6.15px;font-weight:bold;color:#1c1c1c;letter-spacing:0.28px">Messing</span>
<div style="left:440.5px;top:128.5px;width:138px;height:15.0px;background:#d8d0ee;border:1px solid #a4c5fa"></div>
<span style="left:409.5px;width:200px;text-align:center;top:132.59px;font-size:6.15px;font-weight:bold;color:#1c1c1c;letter-spacing:0.28px">DIN 933</span>
<div style="left:440.4px;top:143.2px;width:93.20000000000005px;height:10.800000000000011px;border:1px solid #a4c5fa;"></div>
<span style="left:443px;top:145.26px;font-size:5.6px;color:#222;letter-spacing:0.05px;font-weight:bold">Anwendungen</span>
<div style="left:440.4px;top:157.5px;width:138.20000000000005px;height:78.1px;border:1px solid #a4c5fa;"></div>
<div style="left:446px;top:164px;width:2px;height:2px;background:#404040"></div>
<span style="left:450px;top:162.38px;font-size:6.05px;font-weight:bold;color:#1c1c1c;letter-spacing:0.22px">Möbelrestaurierung</span>
<div style="left:446px;top:172px;width:2px;height:2px;background:#404040"></div>
<span style="left:450px;top:170.18px;font-size:6.05px;font-weight:bold;color:#1c1c1c;letter-spacing:0.22px">Bootsbau (Innenbereich)</span>
<div style="left:446px;top:180px;width:2px;height:2px;background:#404040"></div>
<span style="left:450px;top:177.98px;font-size:6.05px;font-weight:bold;color:#1c1c1c;letter-spacing:0.22px">Elektroinstallation</span>
<div style="left:446px;top:187px;width:2px;height:2px;background:#404040"></div>
<span style="left:450px;top:185.78px;font-size:6.05px;font-weight:bold;color:#1c1c1c;letter-spacing:0.22px">Designobjekte</span>
<div style="left:446px;top:195px;width:2px;height:2px;background:#404040"></div>
<span style="left:450px;top:193.58px;font-size:6.05px;font-weight:bold;color:#1c1c1c;letter-spacing:0.22px">Musikinstrumente</span>
<div style="left:440.4px;top:227.4px;width:93.20000000000005px;height:12.199999999999989px;border:1px solid #a4c5fa;"></div>
<span style="left:443px;top:229.96px;font-size:5.6px;color:#222;font-weight:bold">Vorteile</span>
<div style="left:440.4px;top:242.3px;width:134.39999999999998px;height:71.30000000000001px;border:1px solid #a4c5fa;"></div>
<div style="left:446px;top:249px;width:2px;height:2px;background:#404040"></div>
<span style="left:450px;top:247.18px;font-size:6.05px;font-weight:bold;color:#1c1c1c;letter-spacing:0.22px">Edles, dekoratives Erscheinungsbild</span>
<div style="left:446px;top:256px;width:2px;height:2px;background:#404040"></div>
<span style="left:450px;top:254.98px;font-size:6.05px;font-weight:bold;color:#1c1c1c;letter-spacing:0.22px">Natürliche Korrosionsbeständigkeit</span>
<div style="left:446px;top:264px;width:2px;height:2px;background:#404040"></div>
<span style="left:450px;top:262.78px;font-size:6.05px;font-weight:bold;color:#1c1c1c;letter-spacing:0.22px">Antimagnetisch und funkenarm</span>
<div style="left:446px;top:272px;width:2px;height:2px;background:#404040"></div>
<span style="left:450px;top:270.58px;font-size:6.05px;font-weight:bold;color:#1c1c1c;letter-spacing:0.22px">Entwickelt attraktive Patina</span>
<div style="left:96.2px;top:68.9px;width:475.6px;height:1px;background:rgba(240,60,240,0.5)"></div>
<div style="left:96.2px;top:391px;width:475.6px;height:1px;background:rgba(240,60,240,0.5)"></div>
<div style="left:96.1px;top:69.9px;width:1px;height:321.1px;background:rgba(150,80,240,0.5)"></div>
<div style="left:571.3px;top:69.9px;width:1px;height:321.1px;background:rgba(150,80,240,0.5)"></div>
<span style="left:94px;top:67.14px;font-size:10px;font-weight:bold;color:#2c62ee">SC-MES-001</span>
<div style="left:640px;top:34px;width:8px;height:381px;background:#505050"></div>
<svg style="left:640px;top:35px" width="7" height="5"><path d="M1 3.6 L3.5 1.4 L6 3.6" stroke="#9a9a9a" stroke-width="0.8" fill="none"/></svg>
<svg style="left:640px;top:410.5px" width="7" height="5"><path d="M1 1.4 L3.5 3.6 L6 1.4" stroke="#9a9a9a" stroke-width="0.8" fill="none"/></svg>
<div style="left:20px;top:416.3px;width:628px;height:8.7px;background:#4e4e4e"></div>
<div style="left:647px;top:19px;width:1.5px;height:406px;background:#474747"></div>
<div style="left:648.5px;top:19px;width:19.5px;height:406px;background:#515151"></div>
<div style="left:647px;top:19px;width:153px;height:7px;background:#434343"></div>
<div style="left:661.6px;top:20.8px;width:0.9px;height:2.2px;background:#bbb"></div>
<div style="left:663.6px;top:20.8px;width:0.9px;height:2.2px;background:#bbb"></div>
<div style="left:648.5px;top:26px;width:19.5px;height:20.5px;background:#555;border-bottom:1px solid #454545"></div>
<div style="left:652px;top:28px;width:1px;height:0.8px;background:#777"></div>
<div style="left:654px;top:28px;width:1px;height:0.8px;background:#777"></div>
<div style="left:656px;top:28px;width:1px;height:0.8px;background:#777"></div>
<div style="left:658px;top:28px;width:1px;height:0.8px;background:#777"></div>
<div style="left:660px;top:28px;width:1px;height:0.8px;background:#777"></div>
<div style="left:662px;top:28px;width:1px;height:0.8px;background:#777"></div>
<svg style="left:653px;top:32px" width="10" height="10" viewBox="0 0 10 10"><rect x="0.5" y="0.5" width="3" height="9" fill="#ccc"/><rect x="1.3" y="2" width="1.4" height="1.2" fill="#555"/><rect x="1.3" y="4.5" width="1.4" height="1.2" fill="#555"/><path d="M5.2 1.5 L7 0.8 M6.2 0.6 C9.2 1.8 9.2 7.5 5.6 9.2" stroke="#ccc" stroke-width="0.9" fill="none"/></svg>
<div style="left:668px;top:19px;width:1.6px;height:406px;background:#444"></div>
<div style="left:669.6px;top:19px;width:130.4px;height:406px;background:#535353"></div>
<div style="left:669.6px;top:19px;width:130.4px;height:7px;background:#434343"></div>
<div style="left:795px;top:20.8px;width:0.9px;height:2.2px;background:#bbb"></div>
<div style="left:797px;top:20.8px;width:0.9px;height:2.2px;background:#bbb"></div>
<div style="left:669.6px;top:26px;width:130.4px;height:14px;background:#454545"></div>
<div style="left:670.5px;top:26px;width:50px;height:14px;background:#535353"></div>
<div style="left:748px;top:26px;width:0.8px;height:14px;background:#3a3a3a"></div>
<div style="left:783.5px;top:26px;width:0.8px;height:14px;background:#3a3a3a"></div>
<span style="left:676px;top:30.64px;font-size:5.75px;color:#e0e0e0;-webkit-text-stroke:0.12px #e0e0e0;font-weight:bold;color:#f2f2f2">Eigenschaften</span>
<span style="left:726.6px;top:30.55px;font-size:5.9px;color:#e0e0e0;-webkit-text-stroke:0.12px #e0e0e0;font-weight:bold;color:#bdbdbd">Seiten</span>
<span style="left:753.5px;top:30.55px;font-size:5.9px;color:#e0e0e0;-webkit-text-stroke:0.12px #e0e0e0;font-weight:bold;color:#bdbdbd">CC Librarie</span>
<span style="left:675px;top:47.14px;font-size:5.2px;color:#e0e0e0;-webkit-text-stroke:0.12px #e0e0e0;">Keine Auswahl</span>
<div style="left:669.6px;top:57.6px;width:130.4px;height:0.9px;background:#4a4a4a"></div>
<span style="left:675px;top:64.58px;font-size:5.3px;color:#e0e0e0;-webkit-text-stroke:0.12px #e0e0e0;">Dokument</span>
<div style="left:675px;top:75px;width:48.299999999999955px;height:10.200000000000003px;background:#474747;border:0.8px solid #5e5e5e;border-radius:1.5px"></div>
<div style="left:715px;top:75.6px;width:0.8px;height:9px;background:#5e5e5e"></div>
<span style="left:677.5px;top:78.08px;font-size:5.3px;color:#e0e0e0;-webkit-text-stroke:0.12px #e0e0e0;">[Benutzerdef...</span>
<svg style="left:717px;top:78.5px" width="5" height="4"><path d="M0.6 0.8 L2.5 2.6 L4.4 0.8" stroke="#ccc" stroke-width="0.7" fill="none"/></svg>
<svg style="left:742.5px;top:75.8px" width="9" height="9" viewBox="0 0 9 9"><rect x="0.5" y="0.5" width="8" height="8" fill="none" stroke="#cfcfcf" stroke-width="0.8"/><rect x="3" y="1.6" width="3" height="2.4" fill="#cfcfcf"/><rect x="2" y="4.4" width="5" height="3.6" fill="#cfcfcf"/></svg>
<div style="left:754.6px;top:75px;width:11.6px;height:11px;background:#2f2f2f;border-radius:1px"></div>
<svg style="left:756.5px;top:76.8px" width="8" height="8" viewBox="0 0 8 8"><rect x="0.5" y="0.5" width="7" height="7" fill="none" stroke="#d5d5d5" stroke-width="0.8"/><rect x="3.6" y="2.2" width="3.2" height="3.6" fill="#d5d5d5"/><rect x="1" y="3.4" width="2.4" height="1.2" fill="#d5d5d5"/></svg>
<span style="left:678px;top:95.24px;font-size:5.2px;color:#e0e0e0;-webkit-text-stroke:0.12px #e0e0e0;">B:</span>
<div style="left:685.3px;top:92.3px;width:8.799999999999955px;height:9.900000000000006px;background:#474747;border:0.8px solid #5e5e5e;border-radius:1.5px"></div>
<svg style="left:685.3px;top:92.3px" width="9" height="9.900000000000006"><path d="M2.6 3.8 L4.4 2.2 L6.2 3.8 M2.6 6.1 L4.4 7.7 L6.2 6.1" stroke="#bbb" stroke-width="0.7" fill="none"/></svg>
<div style="left:694.4px;top:92.3px;width:28.899999999999977px;height:9.900000000000006px;background:#474747;border:0.8px solid #5e5e5e;border-radius:1.5px"></div>
<span style="left:696.9px;top:95.18px;font-size:5.3px;color:#e0e0e0;-webkit-text-stroke:0.12px #e0e0e0;">842,25 Pt</span>
<span style="left:678px;top:108.44px;font-size:5.2px;color:#e0e0e0;-webkit-text-stroke:0.12px #e0e0e0;">H:</span>
<div style="left:685.3px;top:105.5px;width:8.799999999999955px;height:9.900000000000006px;background:#474747;border:0.8px solid #5e5e5e;border-radius:1.5px"></div>
<svg style="left:685.3px;top:105.5px" width="9" height="9.900000000000006"><path d="M2.6 3.8 L4.4 2.2 L6.2 3.8 M2.6 6.1 L4.4 7.7 L6.2 6.1" stroke="#bbb" stroke-width="0.7" fill="none"/></svg>
<div style="left:694.4px;top:105.5px;width:28.899999999999977px;height:9.900000000000006px;background:#474747;border:0.8px solid #5e5e5e;border-radius:1.5px"></div>
<span style="left:696.9px;top:108.38px;font-size:5.3px;color:#e0e0e0;-webkit-text-stroke:0.12px #e0e0e0;">595,5 Pt</span>
<svg style="left:740.2px;top:92px" width="10.5" height="10" viewBox="0 0 10.5 10"><path d="M0.4 3.2 L4.4 2 V8.8 H0.4 Z M10.1 3.2 L6.1 2 V8.8 H10.1 Z" fill="#cdcdcd"/><rect x="4.7" y="0.4" width="1.1" height="9.4" fill="#cdcdcd"/><path d="M2.4 3.6 V8.2 M8.1 3.6 V8.2" stroke="#9a9a9a" stroke-width="0.5"/></svg>
<div style="left:753px;top:92.3px;width:35.5px;height:9.900000000000006px;background:#474747;border:0.8px solid #5e5e5e;border-radius:1.5px"></div>
<span style="left:755.5px;top:95.18px;font-size:5.3px;color:#e0e0e0;-webkit-text-stroke:0.12px #e0e0e0;">4</span>
<div style="left:741.4px;top:108.3px;width:6.3px;height:6.3px;border:0.8px solid #8e8e8e;border-radius:1px"></div>
<span style="left:750.5px;top:109.63px;font-size:5.3px;color:#e0e0e0;-webkit-text-stroke:0.12px #e0e0e0;">Doppelseite</span>
<span style="left:675px;top:123.28px;font-size:5.3px;color:#e0e0e0;-webkit-text-stroke:0.12px #e0e0e0;">Ränder</span>
<svg style="left:675px;top:134.2px" width="9" height="9" viewBox="0 0 9 9"><rect x="0" y="0" width="9" height="2" fill="#cfcfcf"/><rect x="0.4" y="3.4" width="8.2" height="5.2" fill="none" stroke="#cfcfcf" stroke-width="0.8"/></svg>
<div style="left:685.8px;top:133.7px;width:8.799999999999955px;height:9.900000000000006px;background:#474747;border:0.8px solid #5e5e5e;border-radius:1.5px"></div>
<svg style="left:685.8px;top:133.7px" width="9" height="9.900000000000006"><path d="M2.6 3.8 L4.4 2.2 L6.2 3.8 M2.6 6.1 L4.4 7.7 L6.2 6.1" stroke="#bbb" stroke-width="0.7" fill="none"/></svg>
<div style="left:694.4px;top:133.7px;width:28.899999999999977px;height:9.900000000000006px;background:#474747;border:0.8px solid #5e5e5e;border-radius:1.5px"></div>
<span style="left:696.9px;top:136.59px;font-size:5.3px;color:#e0e0e0;-webkit-text-stroke:0.12px #e0e0e0;">36 Pt</span>
<svg style="left:675px;top:147.5px" width="9" height="9" viewBox="0 0 9 9"><rect x="0.4" y="0.4" width="8.2" height="5.2" fill="none" stroke="#cfcfcf" stroke-width="0.8"/><rect x="0" y="7" width="9" height="2" fill="#cfcfcf"/></svg>
<div style="left:685.8px;top:146.9px;width:8.799999999999955px;height:10.199999999999989px;background:#474747;border:0.8px solid #5e5e5e;border-radius:1.5px"></div>
<svg style="left:685.8px;top:146.9px" width="9" height="10.199999999999989"><path d="M2.6 3.9 L4.4 2.2 L6.2 3.9 M2.6 6.3 L4.4 8.0 L6.2 6.3" stroke="#bbb" stroke-width="0.7" fill="none"/></svg>
<div style="left:694.4px;top:146.9px;width:28.899999999999977px;height:10.199999999999989px;background:#474747;border:0.8px solid #5e5e5e;border-radius:1.5px"></div>
<span style="left:696.9px;top:149.89px;font-size:5.3px;color:#e0e0e0;-webkit-text-stroke:0.12px #e0e0e0;">36 Pt</span>
<svg style="left:740.8px;top:134.2px" width="9" height="9" viewBox="0 0 9 9"><rect x="0" y="0" width="2.2" height="9" fill="#cfcfcf"/><rect x="3.4" y="0.4" width="5.2" height="8.2" fill="none" stroke="#cfcfcf" stroke-width="0.8"/></svg>
<div style="left:751.8px;top:133.7px;width:8.799999999999955px;height:9.900000000000006px;background:#474747;border:0.8px solid #5e5e5e;border-radius:1.5px"></div>
<svg style="left:751.8px;top:133.7px" width="9" height="9.900000000000006"><path d="M2.6 3.8 L4.4 2.2 L6.2 3.8 M2.6 6.1 L4.4 7.7 L6.2 6.1" stroke="#bbb" stroke-width="0.7" fill="none"/></svg>
<div style="left:760.4px;top:133.7px;width:29.200000000000045px;height:9.900000000000006px;background:#474747;border:0.8px solid #5e5e5e;border-radius:1.5px"></div>
<span style="left:763px;top:136.59px;font-size:5.3px;color:#e0e0e0;-webkit-text-stroke:0.12px #e0e0e0;">36 Pt</span>
<svg style="left:740.8px;top:147.5px" width="9" height="9" viewBox="0 0 9 9"><rect x="0.4" y="0.4" width="5.2" height="8.2" fill="none" stroke="#cfcfcf" stroke-width="0.8"/><rect x="6.8" y="0" width="2.2" height="9" fill="#cfcfcf"/></svg>
<div style="left:751.8px;top:146.9px;width:8.799999999999955px;height:10.199999999999989px;background:#474747;border:0.8px solid #5e5e5e;border-radius:1.5px"></div>
<svg style="left:751.8px;top:146.9px" width="9" height="10.199999999999989"><path d="M2.6 3.9 L4.4 2.2 L6.2 3.9 M2.6 6.3 L4.4 8.0 L6.2 6.3" stroke="#bbb" stroke-width="0.7" fill="none"/></svg>
<div style="left:760.4px;top:146.9px;width:29.200000000000045px;height:10.199999999999989px;background:#474747;border:0.8px solid #5e5e5e;border-radius:1.5px"></div>
<span style="left:763px;top:149.89px;font-size:5.3px;color:#e0e0e0;-webkit-text-stroke:0.12px #e0e0e0;">36 Pt</span>
<svg style="left:728.5px;top:140.5px" width="8" height="9" viewBox="0 0 8 9"><path d="M1.2 3.2 L3.2 1.2 Q4 0.6 4.8 1.4 Q5.4 2.2 4.6 3 M3.4 6 Q2.6 6.8 1.8 6 Q1 5.2 1.8 4.4 M5 4.2 L6.6 6 Q7.2 6.8 6.4 7.6 Q5.6 8.2 4.8 7.4 M0.6 1 L7.4 8.2" stroke="#c8c8c8" stroke-width="0.8" fill="none"/></svg>
<div style="left:674.6px;top:165.4px;width:115.19999999999993px;height:10.299999999999983px;border:0.8px solid #676767;border-radius:2px;background:#525252"></div>
<span style="left:674.6px;width:115.19999999999993px;text-align:center;top:168.22px;font-size:5.5px;color:#dedede;-webkit-text-stroke:0.12px #dedede">Layout anpassen</span>
<div style="left:669.6px;top:179.4px;width:130.4px;height:0.9px;background:#4a4a4a"></div>
<span style="left:675px;top:187.03px;font-size:5.4px;color:#e0e0e0;-webkit-text-stroke:0.12px #e0e0e0;font-weight:bold;color:#d8d8d8">Seite</span>
<div style="left:675px;top:196.6px;width:48.299999999999955px;height:10.400000000000006px;background:#474747;border:0.8px solid #5e5e5e;border-radius:1.5px"></div>
<div style="left:715px;top:197.2px;width:0.8px;height:9.2px;background:#5e5e5e"></div>
<span style="left:677.5px;top:199.69px;font-size:5.3px;color:#e0e0e0;-webkit-text-stroke:0.12px #e0e0e0;">4</span>
<svg style="left:717px;top:200.3px" width="5" height="4"><path d="M0.6 0.8 L2.5 2.6 L4.4 0.8" stroke="#ccc" stroke-width="0.7" fill="none"/></svg>
<svg style="left:765px;top:199.3px" width="6.5" height="6.5" viewBox="0 0 7 7"><rect x="0.4" y="0.4" width="6.2" height="6.2" fill="none" stroke="#bdbdbd" stroke-width="0.8"/><path d="M3.5 1.8 V5.2 M1.8 3.5 H5.2" stroke="#bdbdbd" stroke-width="0.8"/></svg>
<svg style="left:778.8px;top:199px" width="6.5" height="7" viewBox="0 0 7 7.5"><rect x="0" y="0.8" width="7" height="1" fill="#bdbdbd"/><rect x="2.4" y="0" width="2.2" height="1" fill="#bdbdbd"/><path d="M0.9 2.2 H6.1 L5.7 7.4 H1.3 Z" fill="#bdbdbd"/><path d="M2.6 3 V6.6 M4.4 3 V6.6" stroke="#535353" stroke-width="0.5"/></svg>
<div style="left:674.6px;top:211.6px;width:115.19999999999993px;height:10.700000000000017px;border:0.8px solid #676767;border-radius:2px;background:#525252"></div>
<span style="left:674.6px;width:115.19999999999993px;text-align:center;top:214.62px;font-size:5.5px;color:#dedede;-webkit-text-stroke:0.12px #dedede">Seite bearbeiten</span>
<div style="left:669.6px;top:226.1px;width:130.4px;height:0.9px;background:#4a4a4a"></div>
<span style="left:675px;top:235.39px;font-size:5.3px;color:#e0e0e0;-webkit-text-stroke:0.12px #e0e0e0;">Lineale und Raster</span>
<div style="left:738px;top:231.4px;width:11.2px;height:11.2px;background:#2f2f2f;border-radius:1px"></div>
<svg style="left:739.6px;top:233px" width="8" height="8" viewBox="0 0 8 8"><rect x="0.4" y="0.4" width="7.2" height="7.2" fill="none" stroke="#cfcfcf" stroke-width="0.8"/><rect x="0" y="0" width="8" height="2" fill="#cfcfcf"/><rect x="0" y="0" width="2" height="8" fill="#cfcfcf"/><rect x="2.6" y="2.6" width="5" height="5" fill="#222"/></svg>
<svg style="left:759.5px;top:232.5px" width="9" height="9" viewBox="0 0 9 9"><rect x="0.4" y="0.4" width="8.2" height="8.2" fill="none" stroke="#cfcfcf" stroke-width="0.8"/><path d="M0.4 2.3 H8.6 M0.4 4 H8.6 M0.4 5.6 H8.6 M0.4 7.2 H8.6" stroke="#cfcfcf" stroke-width="0.5"/></svg>
<svg style="left:778.8px;top:232.5px" width="9" height="9" viewBox="0 0 9 9"><rect x="0.4" y="0.4" width="8.2" height="8.2" fill="none" stroke="#cfcfcf" stroke-width="0.8"/><path d="M0.4 3.1 H8.6 M0.4 5.9 H8.6 M3.1 0.4 V8.6 M5.9 0.4 V8.6" stroke="#cfcfcf" stroke-width="0.7"/></svg>
<span style="left:675px;top:256.08px;font-size:5.3px;color:#e0e0e0;-webkit-text-stroke:0.12px #e0e0e0;">Hilfslinien</span>
<div style="left:738px;top:252.4px;width:11px;height:11px;background:#2f2f2f;border-radius:1px"></div>
<div style="left:758.8px;top:252.4px;width:11px;height:11px;background:#2f2f2f;border-radius:1px"></div>
<div style="left:778.2px;top:252.4px;width:11px;height:11px;background:#2f2f2f;border-radius:1px"></div>
<svg style="left:739.5px;top:254px" width="8" height="8" viewBox="0 0 8 8"><path d="M2.4 0 V8 M0.5 2.4 H7.5 M0.5 5.6 H7.5" stroke="#d8d8d8" stroke-width="0.8"/></svg>
<svg style="left:760.3px;top:254px" width="8" height="8" viewBox="0 0 8 8"><path d="M2.4 0 V8 M0.5 2.4 H7.5 M0.5 5.6 H4.5" stroke="#d8d8d8" stroke-width="0.8"/><rect x="4.8" y="5" width="3" height="2.6" fill="#d8d8d8"/></svg>
<svg style="left:779.7px;top:254px" width="8" height="8" viewBox="0 0 8 8"><path d="M2.4 0 V8 M0.5 2.4 H5" stroke="#d8d8d8" stroke-width="0.8"/><path d="M7 4 Q5 3.6 5.4 5 Q7.2 5.6 6.6 7 Q5.6 7.6 4.8 7" stroke="#d8d8d8" stroke-width="0.7" fill="none"/></svg>
<div style="left:669.6px;top:267px;width:130.4px;height:0.9px;background:#4a4a4a"></div>
<span style="left:675px;top:272.89px;font-size:5.3px;color:#e0e0e0;-webkit-text-stroke:0.12px #e0e0e0;">Schnellaktionen</span>
<div style="left:674.3px;top:282.1px;width:55.200000000000045px;height:10.799999999999955px;border:0.8px solid #676767;border-radius:2px;background:#525252"></div>
<span style="left:674.3px;width:55.200000000000045px;text-align:center;top:285.34px;font-size:5.2px;color:#dedede;-webkit-text-stroke:0.12px #dedede">Datei importieren</span>
<div style="left:734.8px;top:282.1px;width:55.0px;height:10.799999999999955px;border:0.8px solid #676767;border-radius:2px;background:#525252"></div>
<span style="left:734.8px;width:55.0px;text-align:center;top:285.28px;font-size:5.3px;color:#dedede;-webkit-text-stroke:0.12px #dedede">Text zu Bild</span>
<svg style="left:5px;top:35.5px" width="8" height="9" viewBox="0 0 8 9"><path d="M0.8 0.8 L7.2 5.6 L4 5.6 L2.4 8.4 Z" fill="none" stroke="#c4c4c4" stroke-width="0.9" stroke-linejoin="round"/></svg>
<svg style="left:5px;top:47.5px" width="8" height="9" viewBox="0 0 8 9"><path d="M0.8 0.6 L7.4 5.6 L4.2 5.8 L1 8.6 Z" fill="#c4c4c4"/></svg>
<svg style="left:4.5px;top:60.5px" width="9" height="9.5" viewBox="0 0 9 9.5"><path d="M0.5 0.5 H4 L6.4 2.9 V4.8 M0.5 0.5 V8.6 H4.6 M4 0.5 V2.9 H6.4" fill="none" stroke="#c4c4c4" stroke-width="0.9"/><path d="M5 5 L8.8 7.3 L6.9 7.6 L5.8 9.2 Z" fill="#c4c4c4"/></svg>
<svg style="left:3.5px;top:73px" width="11" height="8" viewBox="0 0 11 8"><path d="M0.6 0 V8 M10.4 0 V8 M1.4 4 H9.6 M3.2 2.4 L1.4 4 L3.2 5.6 M7.8 2.4 L9.6 4 L7.8 5.6" fill="none" stroke="#c4c4c4" stroke-width="0.9"/></svg>
<svg style="left:4.2px;top:85.4px" width="8" height="8.6" viewBox="0 0 8 8.6"><path d="M0.5 3.2 V8.1 H7.5 V3.2" fill="none" stroke="#c4c4c4" stroke-width="0.9"/><rect x="1.8" y="5" width="4.4" height="2.4" fill="#c4c4c4"/><path d="M3.2 0.4 L4.2 3.6 L5.6 1.8" stroke="#c4c4c4" stroke-width="0.8" fill="none"/></svg>
<svg style="left:13px;top:93.5px" width="2" height="2" viewBox="0 0 2 2"><path d="M2 0 V2 H0 Z" fill="#bbb"/></svg>
<svg style="left:4.5px;top:100.5px" width="8" height="6.5" viewBox="0 0 8 6.5"><path d="M0.4 0.5 H7.6 M4 0.5 V6.1 M2.6 6.1 H5.4 M0.5 0.4 V1.8 M7.5 0.4 V1.8" fill="none" stroke="#c4c4c4" stroke-width="0.9"/></svg>
<svg style="left:13px;top:106px" width="2" height="2" viewBox="0 0 2 2"><path d="M2 0 V2 H0 Z" fill="#bbb"/></svg>
<svg style="left:4.5px;top:112.5px" width="8" height="7.2" viewBox="0 0 8 7.2"><path d="M0.4 6.8 L7.6 0.4" stroke="#c4c4c4" stroke-width="0.9"/></svg>
<svg style="left:4px;top:125px" width="8.5" height="8.5" viewBox="0 0 8.5 8.5"><path d="M1 7.5 L2.2 3.6 L5.4 0.8 L7.8 3.2 L5 6.4 Z" fill="#c4c4c4"/><path d="M1 7.5 L3.4 5.2" stroke="#535353" stroke-width="0.6"/></svg>
<svg style="left:13px;top:133px" width="2" height="2" viewBox="0 0 2 2"><path d="M2 0 V2 H0 Z" fill="#bbb"/></svg>
<svg style="left:4px;top:137.3px" width="8.5" height="8.5" viewBox="0 0 8.5 8.5"><path d="M0.8 7.8 L1.4 5.6 L6 1 L7.6 2.6 L3 7.2 Z" fill="#c4c4c4"/></svg>
<svg style="left:13px;top:145px" width="2" height="2" viewBox="0 0 2 2"><path d="M2 0 V2 H0 Z" fill="#bbb"/></svg>
<svg style="left:4px;top:150.3px" width="9" height="7.8" viewBox="0 0 9 7.8"><rect x="0.45" y="0.45" width="8.1" height="6.9" fill="none" stroke="#c4c4c4" stroke-width="0.9"/><path d="M0.6 0.6 L8.4 7.2 M8.4 0.6 L0.6 7.2" stroke="#c4c4c4" stroke-width="0.8"/></svg>
<svg style="left:13px;top:157.5px" width="2" height="2" viewBox="0 0 2 2"><path d="M2 0 V2 H0 Z" fill="#bbb"/></svg>
<svg style="left:4px;top:162.5px" width="9" height="7.5" viewBox="0 0 9 7.5"><rect x="0.45" y="0.45" width="8.1" height="6.6" fill="#5e5e5e" stroke="#c4c4c4" stroke-width="0.9"/></svg>
<svg style="left:13px;top:170px" width="2" height="2" viewBox="0 0 2 2"><path d="M2 0 V2 H0 Z" fill="#bbb"/></svg>
<svg style="left:4px;top:176.3px" width="9" height="8.5" viewBox="0 0 9 8.5"><path d="M0.6 0.6 L6 6 M0.6 7.9 L6 2.5" stroke="#c4c4c4" stroke-width="0.9"/><circle cx="7" cy="1.8" r="1.4" fill="none" stroke="#c4c4c4" stroke-width="0.8"/><circle cx="7" cy="6.8" r="1.4" fill="none" stroke="#c4c4c4" stroke-width="0.8"/></svg>
<svg style="left:3.5px;top:188.5px" width="10" height="9.2" viewBox="0 0 10 9.2"><path d="M0.6 1 L4.8 4.4 L2.8 4.6 L1.6 6.6 Z" fill="#c4c4c4"/><rect x="2.2" y="2.2" width="7" height="6.4" fill="none" stroke="#c4c4c4" stroke-width="0.7" stroke-dasharray="1 0.8"/></svg>
<div style="left:4px;top:201.5px;width:9px;height:8px;background:linear-gradient(90deg,#3a3a3a,#d8d8d8);border:0.6px solid #aaa"></div>
<svg style="left:4px;top:213.5px" width="9" height="8" viewBox="0 0 9 8"><rect x="0.4" y="0.4" width="8.2" height="7.2" fill="#777" stroke="#c4c4c4" stroke-width="0.8"/><circle cx="2.6" cy="2.8" r="1" fill="#333"/><circle cx="4.5" cy="2.8" r="1" fill="#333"/><circle cx="6.4" cy="2.8" r="1" fill="#333"/><circle cx="2.6" cy="5.2" r="1" fill="#333"/><circle cx="4.5" cy="5.2" r="1" fill="#333"/><circle cx="6.4" cy="5.2" r="1" fill="#333"/></svg>
<svg style="left:4.2px;top:227.8px" width="8.5" height="8.5" viewBox="0 0 8.5 8.5"><path d="M0.4 0.4 H8 V5.8 L6 8 H0.4 Z" fill="#d0d0d0"/><path d="M1.6 2 H6.6 M1.6 3.4 H6.6 M1.6 4.8 H4.6" stroke="#555" stroke-width="0.6"/></svg>
<svg style="left:4px;top:240.5px" width="9" height="8.8" viewBox="0 0 9 8.8"><path d="M0.8 8 L1 6.8 L5 2.8 L6.2 4 L2.2 8 Z" fill="none" stroke="#c4c4c4" stroke-width="0.8"/><path d="M5 2 L6.8 0.6 Q8 0 8.4 1 Q8.6 1.8 7.2 3 L6.6 3.8 Z" fill="#c4c4c4"/></svg>
<svg style="left:13px;top:248.5px" width="2" height="2" viewBox="0 0 2 2"><path d="M2 0 V2 H0 Z" fill="#bbb"/></svg>
<svg style="left:4px;top:252.5px" width="9" height="9" viewBox="0 0 9 9"><path d="M2.4 8.6 L0.6 5.2 Q0.6 4.4 1.6 4.8 L2.4 5.8 V1.6 Q2.8 0.8 3.4 1.6 V4 V0.9 Q3.9 0.2 4.5 0.9 V4 V1.2 Q5 0.5 5.6 1.2 V4.2 V2.2 Q6.2 1.6 6.8 2.2 V6.2 Q6.6 8.2 5.6 8.6 Z" fill="#c4c4c4"/></svg>
<svg style="left:4px;top:265.5px" width="9" height="8.5" viewBox="0 0 9 8.5"><circle cx="3.6" cy="3.6" r="2.8" fill="none" stroke="#c4c4c4" stroke-width="0.9"/><path d="M5.6 5.6 L8.4 8.2" stroke="#c4c4c4" stroke-width="1"/></svg>
<svg style="left:1px;top:279px" width="6.5" height="6" viewBox="0 0 6.5 6"><rect x="0.5" y="0.5" width="3.6" height="3.6" fill="#fff" stroke="#222" stroke-width="0.5"/><path d="M0.8 3.8 L3.8 0.8" stroke="#e02020" stroke-width="0.7"/><rect x="2.6" y="2.6" width="3.4" height="3.2" fill="none" stroke="#111" stroke-width="1"/></svg>
<svg style="left:9.5px;top:279px" width="7" height="6.5" viewBox="0 0 7 6.5"><path d="M1 2.2 H5 V5.6 M3.6 4.4 L5 5.8 L6.4 4.4 M2.2 0.8 L0.8 2.2 L2.2 3.6" fill="none" stroke="#c4c4c4" stroke-width="0.8"/></svg>
<div style="left:5.4px;top:292.4px;width:10.2px;height:9.6px;border:2.6px solid #111;background:#535353"></div>
<div style="left:0.8px;top:287.5px;width:10.2px;height:10px;background:#fff;border:0.5px solid #888"></div>
<svg style="left:0.8px;top:287.5px" width="10.2" height="10" viewBox="0 0 10.2 10"><path d="M0.6 9.4 L9.6 0.6" stroke="#e01818" stroke-width="1.1"/></svg>
<div style="left:1.5px;top:307.4px;width:5.8px;height:5px;background:#3d3d3d;border-radius:0.5px"></div>
<svg style="left:2.3px;top:308.1px" width="4.2" height="3.6" viewBox="0 0 4.2 3.6"><rect x="0.3" y="0.3" width="3.6" height="3" fill="none" stroke="#bbb" stroke-width="0.6"/></svg>
<svg style="left:10.7px;top:307.5px" width="4.6" height="5" viewBox="0 0 4.6 5"><path d="M0.2 0.5 H4.4 M2.3 0.5 V4.8" stroke="#c4c4c4" stroke-width="1"/></svg>
<div style="left:1.2px;top:317.4px;width:14.1px;height:10.2px;background:#3b3b3b;border-radius:1px"></div>
<div style="left:3.7px;top:318.9px;width:8.5px;height:6.9px;background:#fff"></div>
<svg style="left:3.7px;top:318.9px" width="8.5" height="6.9" viewBox="0 0 8.5 6.9"><path d="M0.4 6.6 L8.2 0.3" stroke="#e01818" stroke-width="1.1"/></svg>
<svg style="left:13.2px;top:325.4px" width="2" height="2" viewBox="0 0 2 2"><path d="M2 0 V2 H0 Z" fill="#bbb"/></svg>
<svg style="left:4.6px;top:335px" width="7.6" height="5.4" viewBox="0 0 7.6 5.4"><rect x="1.6" y="1.4" width="6" height="4" fill="#c4c4c4"/><path d="M0.4 2.2 H1.2 M1 0.4 V1.4 M6.4 0.2 V1.2" stroke="#c4c4c4" stroke-width="0.6"/></svg>
<div style="left:1.2px;top:346.4px;width:14.1px;height:10.7px;background:#3b3b3b;border-radius:1px"></div>
<div style="left:5.4px;top:348.7px;width:6.8px;height:6.1px;background:#9a9a9a;border:0.6px solid #c8c8c8"></div>
<svg style="left:13.2px;top:355px" width="2" height="2" viewBox="0 0 2 2"><path d="M2 0 V2 H0 Z" fill="#bbb"/></svg>
<div style="left:216px;top:382px;width:236px;height:18.5px;background:#4a4a4a;border:0.6px solid #3a3a3a;border-radius:1px"></div>
<div style="left:218.7px;top:385px;width:2.4px;height:12.5px;background:#383838"></div>
<div style="left:224px;top:384.2px;width:80.2px;height:14px;border:0.7px solid #555;border-radius:1px"></div>
<svg style="left:229px;top:388px" width="8.8" height="7.5" viewBox="0 0 8.8 7.5"><rect x="0.4" y="0.4" width="8" height="6.7" fill="none" stroke="#c8c8c8" stroke-width="0.8"/><path d="M0.6 0.6 L8.2 6.9 M8.2 0.6 L0.6 6.9" stroke="#c8c8c8" stroke-width="0.7"/></svg>
<span style="left:240.8px;top:388.7px;font-size:6.1px;color:#d8d8d8">Rahmen hinzufügen</span>
<div style="left:306.5px;top:384.2px;width:77.2px;height:14px;border:0.7px solid #555;border-radius:1px"></div>
<svg style="left:309.7px;top:387.5px" width="9.2" height="8.5" viewBox="0 0 9.2 8.5"><path d="M0.6 2.8 L3 0.6 H6.4 L8.6 2.8 V4.4 M0.6 2.8 V7.8 H4.2" fill="none" stroke="#c8c8c8" stroke-width="0.8"/><circle cx="6.6" cy="6.4" r="2" fill="#c8c8c8"/><path d="M6.6 5.2 V7.6 M5.4 6.4 H7.8" stroke="#444" stroke-width="0.6"/><path d="M1.6 4.2 L3.4 2.6 L4.8 4" stroke="#c8c8c8" stroke-width="0.7" fill="none"/></svg>
<span style="left:322.2px;top:388.7px;font-size:6.1px;color:#d8d8d8">Bilderstellung starten</span>
<svg style="left:388.7px;top:388px" width="8.2" height="7.4" viewBox="0 0 8.2 7.4"><path d="M0.5 0.5 H7.7 M4.1 0.5 V6.9 M2.5 6.9 H5.7 M0.6 0.4 V2 M7.6 0.4 V2" fill="none" stroke="#d0d0d0" stroke-width="0.9"/></svg>
<svg style="left:405.8px;top:387.8px" width="7.4" height="8.4" viewBox="0 0 7.4 8.4"><path d="M0.7 0.7 H4.5 L6.7 2.9 V7.7 H0.7 Z" fill="#8a8a8a" stroke="#c4c4c4" stroke-width="1"/><path d="M4.5 0.7 V2.9 H6.7" fill="none" stroke="#c4c4c4" stroke-width="0.7"/></svg>
<svg style="left:422.7px;top:387.8px" width="8.6" height="8.6" viewBox="0 0 8.6 8.6"><path d="M3.8 7.9 H0.5 V0.5 H4.3 L6.3 2.5 V3.6 M4.3 0.5 V2.5 H6.3" fill="none" stroke="#c4c4c4" stroke-width="0.8"/><circle cx="6.2" cy="6.2" r="2" fill="#4a4a4a" stroke="#c4c4c4" stroke-width="0.8"/><path d="M6.2 5.2 V7.2 M5.2 6.2 H7.2" stroke="#c4c4c4" stroke-width="0.6"/></svg>
<div style="left:439.4px;top:390.9px;width:1.3px;height:1.3px;background:#cfcfcf;border-radius:1px"></div>
<div style="left:442.2px;top:390.9px;width:1.3px;height:1.3px;background:#cfcfcf;border-radius:1px"></div>
<div style="left:445.0px;top:390.9px;width:1.3px;height:1.3px;background:#cfcfcf;border-radius:1px"></div>
<span style="left:28px;top:419.6px;font-size:5.8px;color:#c8c8c8">88,5 %</span>
<svg style="left:50.5px;top:421.1px" width="5" height="3.5" viewBox="0 0 5 3.5"><path d="M0.6 0.6 L2.5 2.6 L4.4 0.6" stroke="#aaa" stroke-width="0.7" fill="none"/></svg>
<svg style="left:61px;top:419.8px" width="5" height="5" viewBox="0 0 5 5"><path d="M0.6 0.3 V4.7" stroke="#aaa" stroke-width="0.8"/><path d="M4.6 0.4 L1.6 2.5 L4.6 4.6 Z" fill="#aaa"/></svg>
<svg style="left:72.5px;top:419.8px" width="4" height="5" viewBox="0 0 4 5"><path d="M3.6 0.4 L0.6 2.5 L3.6 4.6 Z" fill="#aaa"/></svg>
<div style="left:81px;top:416.3px;width:39px;height:8.7px;background:#444"></div>
<span style="left:83px;top:419.6px;font-size:5.8px;color:#d0d0d0">4</span>
<div style="left:120px;top:416px;width:0.8px;height:9px;background:#3e3e3e"></div>
<svg style="left:122px;top:421.1px" width="5" height="3.5" viewBox="0 0 5 3.5"><path d="M0.6 0.6 L2.5 2.6 L4.4 0.6" stroke="#aaa" stroke-width="0.7" fill="none"/></svg>
<svg style="left:135.5px;top:419.8px" width="4" height="5" viewBox="0 0 4 5"><path d="M0.4 0.4 L3.4 2.5 L0.4 4.6 Z" fill="#8a8a8a"/></svg>
<svg style="left:145px;top:419.8px" width="5" height="5" viewBox="0 0 5 5"><path d="M0.4 0.4 L3.4 2.5 L0.4 4.6 Z" fill="#8a8a8a"/><path d="M4.4 0.3 V4.7" stroke="#8a8a8a" stroke-width="0.8"/></svg>
<div style="left:157.5px;top:416px;width:0.8px;height:9px;background:#444"></div>
<svg style="left:158.5px;top:417.2px" width="7" height="8" viewBox="0 0 7 8"><path d="M1 7 A3 3 0 1 1 6 7" fill="none" stroke="#c8c8c8" stroke-width="1"/><path d="M3.5 4.5 L4.8 2.6" stroke="#c8c8c8" stroke-width="0.8"/></svg>
<span style="left:175px;top:419.6px;font-size:5.5px;color:#c8c8c8">[Grundprofil] (Arb...</span>
<svg style="left:229px;top:421.1px" width="5" height="3.5" viewBox="0 0 5 3.5"><path d="M0.6 0.6 L2.5 2.6 L4.4 0.6" stroke="#aaa" stroke-width="0.7" fill="none"/></svg>
<div style="left:241.6px;top:419.4px;width:5px;height:5px;background:#ee2a2a;border-radius:50%"></div>
<span style="left:250px;top:419.6px;font-size:5.5px;color:#c8c8c8">4 Fehler</span>
<svg style="left:288px;top:421.1px" width="5" height="3.5" viewBox="0 0 5 3.5"><path d="M0.6 0.6 L2.5 2.6 L4.4 0.6" stroke="#aaa" stroke-width="0.7" fill="none"/></svg>
<div style="left:294px;top:416px;width:0.8px;height:9px;background:#444"></div>
<svg style="left:297.5px;top:419.8px" width="3" height="5" viewBox="0 0 3 5"><path d="M2.6 0.4 L0.6 2.5 L2.6 4.6" stroke="#888" stroke-width="0.6" fill="none"/></svg>
<div style="left:400px;top:418.4px;width:122.5px;height:6.6px;background:#666;border-radius:3.5px"></div>
<svg style="left:622px;top:419.8px" width="3" height="5" viewBox="0 0 3 5"><path d="M0.4 0.4 L2.4 2.5 L0.4 4.6" stroke="#888" stroke-width="0.6" fill="none"/></svg>
<div style="left:628px;top:416px;width:11px;height:9px;background:#4a4a4a"></div>
<svg style="left:630px;top:419px" width="8" height="6" viewBox="0 0 8 6"><rect x="0.4" y="0.4" width="7.2" height="5.6" fill="none" stroke="#bbb" stroke-width="0.8"/><path d="M4 0.4 V6" stroke="#bbb" stroke-width="0.8"/></svg>
<div style="left:547.5px;top:283px;width:128.5px;height:120.5px;background:#2d2d2d;border-radius:1px;box-shadow:0 1px 3px rgba(0,0,0,0.35)"></div>
<div style="left:548.5px;top:284px;width:126px;height:118px;background:#535353"></div>
<div style="left:548.5px;top:284px;width:126px;height:7px;background:#474747"></div>
<div style="left:660px;top:287.2px;width:3px;height:0.8px;background:#bbb"></div>
<svg style="left:667.5px;top:285px" width="5" height="5" viewBox="0 0 5 5"><path d="M0.5 0.5 L4.5 4.5 M4.5 0.5 L0.5 4.5" stroke="#ccc" stroke-width="0.8"/></svg>
<div style="left:548.5px;top:291px;width:126px;height:13.5px;background:#454545"></div>
<div style="left:585px;top:291px;width:35px;height:13.5px;background:#535353"></div>
<span style="left:556px;top:295.2px;font-size:5.7px;color:#c4c4c4;-webkit-text-stroke:0.1px #c4c4c4">Datenzusa</span>
<span style="left:588px;top:294.8px;font-size:5.6px;color:#ddd;font-weight:bold">: </span>
<span style="left:593.5px;top:294.8px;font-size:5.9px;color:#f2f2f2;font-weight:bold">Skripte</span>
<span style="left:626.4px;top:294.8px;font-size:5.9px;color:#c4c4c4;font-weight:bold">Skriptetike</span>
<div style="left:620px;top:291px;width:0.8px;height:13.5px;background:#3c3c3c"></div>
<div style="left:657.6px;top:291px;width:0.8px;height:13.5px;background:#3c3c3c"></div>
<svg style="left:667.8px;top:295.8px" width="4" height="4" viewBox="0 0 4 4"><rect width="4" height="4" fill="#aaa"/><path d="M0 1.3 H4 M0 2.7 H4" stroke="#454545" stroke-width="0.4"/></svg>
<div style="left:548.5px;top:316.9px;width:119px;height:0.7px;background:#4b4b4b"></div>
<div style="left:548.5px;top:328.4px;width:119px;height:0.7px;background:#4b4b4b"></div>
<div style="left:548.5px;top:339.9px;width:119px;height:0.7px;background:#4b4b4b"></div>
<div style="left:548.5px;top:351px;width:119px;height:0.7px;background:#4b4b4b"></div>
<div style="left:548.5px;top:362.3px;width:119px;height:0.7px;background:#4b4b4b"></div>
<div style="left:548.5px;top:374px;width:119px;height:0.7px;background:#4b4b4b"></div>
<div style="left:549.7px;top:351px;width:117.6px;height:11.3px;background:#4a6a8e"></div>
<svg style="left:573px;top:307.4px" width="7.5" height="7.5" viewBox="0 0 7.5 7.5"><path d="M1.2 2.2 Q1 0.6 2.6 0.6 H3.8 M0.4 2.6 H3.4 M1.8 2.6 V7 M0.6 7 H3 M4.6 3.6 V7 M4.6 4.4 Q5 3.4 6 3.6 Q7 3.8 7 4.8 V7" stroke="#d4d4d4" stroke-width="0.8" fill="none"/></svg>
<span style="left:583.5px;top:308.90px;font-size:5.3px;color:#e0e0e0;-webkit-text-stroke:0.12px #e0e0e0">Indic Preferences</span>
<svg style="left:554.5px;top:320.40000000000003px" width="3" height="4.5" viewBox="0 0 3 4.5"><path d="M0.4 0.4 L2.4 2.2 L0.4 4" stroke="#aaa" stroke-width="0.6" fill="none"/></svg>
<svg style="left:572.7px;top:319.20000000000005px" width="7.5" height="6.5" viewBox="0 0 7.5 6.5"><path d="M0.2 0.6 H2.8 L3.6 1.4 H7.3 V6.3 H0.2 Z" fill="#d0d0d0"/><rect x="0.2" y="2" width="7.1" height="0.4" fill="#9a9a9a"/></svg>
<span style="left:583.5px;top:320.30px;font-size:5.3px;color:#e0e0e0;-webkit-text-stroke:0.12px #e0e0e0">Samples</span>
<svg style="left:554.5px;top:331.90000000000003px" width="3" height="4.5" viewBox="0 0 3 4.5"><path d="M0.4 0.4 L2.4 2.2 L0.4 4" stroke="#aaa" stroke-width="0.6" fill="none"/></svg>
<svg style="left:561.6px;top:330.70000000000005px" width="7.5" height="6.5" viewBox="0 0 7.5 6.5"><path d="M0.2 0.6 H2.8 L3.6 1.4 H7.3 V6.3 H0.2 Z" fill="#d0d0d0"/><rect x="0.2" y="2" width="7.1" height="0.4" fill="#9a9a9a"/></svg>
<span style="left:572.7px;top:331.80px;font-size:5.3px;color:#e0e0e0;-webkit-text-stroke:0.12px #e0e0e0">Community</span>
<svg style="left:553.5px;top:344.1px" width="4.5" height="3" viewBox="0 0 4.5 3"><path d="M0.4 0.4 L2.2 2.4 L4 0.4" stroke="#aaa" stroke-width="0.6" fill="none"/></svg>
<svg style="left:561.6px;top:342.20000000000005px" width="7.5" height="6.5" viewBox="0 0 7.5 6.5"><path d="M0.2 0.6 H2.8 L3.6 1.4 H7.3 V6.3 H0.2 Z" fill="#d0d0d0"/><rect x="0.2" y="2" width="7.1" height="0.4" fill="#9a9a9a"/></svg>
<span style="left:572.7px;top:343.30px;font-size:5.3px;color:#e0e0e0;-webkit-text-stroke:0.12px #e0e0e0">Benutzer</span>
<svg style="left:573px;top:353.2px" width="7.5" height="7.5" viewBox="0 0 7.5 7.5"><path d="M1.2 2.2 Q1 0.6 2.6 0.6 H3.8 M0.4 2.6 H3.4 M1.8 2.6 V7 M0.6 7 H3 M4.6 3.6 V7 M4.6 4.4 Q5 3.4 6 3.6 Q7 3.8 7 4.8 V7" stroke="#d4d4d4" stroke-width="0.8" fill="none"/></svg>
<span style="left:583.5px;top:354.70px;font-size:5.3px;color:#e0e0e0;-webkit-text-stroke:0.12px #e0e0e0">pivot</span>
<svg style="left:573px;top:364.8px" width="7.5" height="7.5" viewBox="0 0 7.5 7.5"><path d="M1.2 2.2 Q1 0.6 2.6 0.6 H3.8 M0.4 2.6 H3.4 M1.8 2.6 V7 M0.6 7 H3 M4.6 3.6 V7 M4.6 4.4 Q5 3.4 6 3.6 Q7 3.8 7 4.8 V7" stroke="#d4d4d4" stroke-width="0.8" fill="none"/></svg>
<span style="left:583.5px;top:366.30px;font-size:5.3px;color:#e0e0e0;-webkit-text-stroke:0.12px #e0e0e0">smarttable-imposed</span>
<svg style="left:573px;top:376.4px" width="7.5" height="7.5" viewBox="0 0 7.5 7.5"><path d="M1.2 2.2 Q1 0.6 2.6 0.6 H3.8 M0.4 2.6 H3.4 M1.8 2.6 V7 M0.6 7 H3 M4.6 3.6 V7 M4.6 4.4 Q5 3.4 6 3.6 Q7 3.8 7 4.8 V7" stroke="#d4d4d4" stroke-width="0.8" fill="none"/></svg>
<span style="left:583.5px;top:377.90px;font-size:5.3px;color:#e0e0e0;-webkit-text-stroke:0.12px #e0e0e0">smarttable</span>
<div style="left:668px;top:304.5px;width:5.5px;height:80px;background:#4e4e4e"></div>
<svg style="left:668.3px;top:305.8px" width="5" height="3.5" viewBox="0 0 5 3.5"><path d="M0.6 2.8 L2.5 0.8 L4.4 2.8" stroke="#999" stroke-width="0.6" fill="none"/></svg>
<div style="left:669px;top:320px;width:3.6px;height:58.5px;background:#6a6a6a;border-radius:2px"></div>
<svg style="left:668.3px;top:380.8px" width="5" height="3.5" viewBox="0 0 5 3.5"><path d="M0.6 0.8 L2.5 2.8 L4.4 0.8" stroke="#999" stroke-width="0.6" fill="none"/></svg>
<div style="left:656.8px;top:389px;width:6px;height:6px;background:#dcdcdc;border-radius:50%"></div>
<svg style="left:656.8px;top:389px" width="6" height="6" viewBox="0 0 6 6"><rect x="2.4" y="2.5" width="1.2" height="2.4" fill="#535353"/><rect x="2.4" y="1.1" width="1.2" height="1" fill="#535353"/></svg>
<div style="left:548.5px;top:398.5px;width:126px;height:4px;background:#454545"></div>
<div style="left:606px;top:399.8px;width:1px;height:1px;background:#3a3a3a"></div>
<div style="left:608px;top:399.8px;width:1px;height:1px;background:#3a3a3a"></div>
<div style="left:610px;top:399.8px;width:1px;height:1px;background:#3a3a3a"></div>
<div style="left:612px;top:399.8px;width:1px;height:1px;background:#3a3a3a"></div>
<div style="left:614px;top:399.8px;width:1px;height:1px;background:#3a3a3a"></div>
</div></body></html>
